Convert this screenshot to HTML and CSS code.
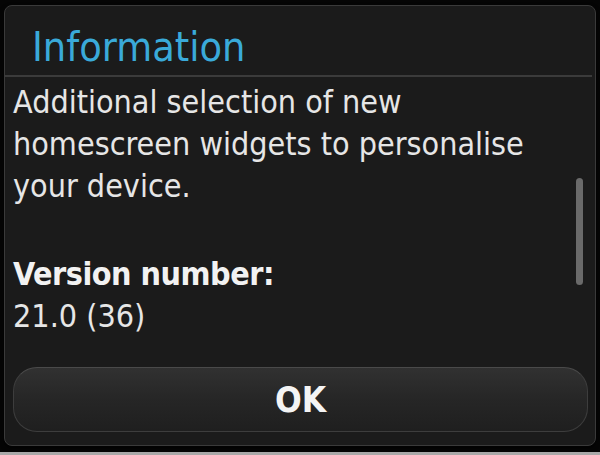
FILE: index.html
```html
<!DOCTYPE html>
<html lang="en">
<head>
    <meta charset="UTF-8">
    <title>Information</title>
    <link rel="stylesheet" href="styles.css">
</head>
<body>
    <div class="dialog">
        <div class="dialog-head">
            <h1>Information</h1>
        </div>
        <div class="dialog-body">
            <p>Additional selection of new homescreen widgets to personalise your device.</p>
            <p class="version"><strong>Version number:</strong><br>21.0 (36)</p>
            <div class="scrollbar"></div>
        </div>
        <div class="dialog-foot">
            <button class="ok-button">OK</button>
        </div>
    </div>
    <div class="softkey-bar"></div>
</body>
</html>
```

FILE: styles.css
```css
html, body {
    margin: 0;
    padding: 0;
}

body {
    width: 600px;
    height: 455px;
    background: #050505;
    font-family: "DejaVu Sans Condensed", "DejaVu Sans", sans-serif;
    font-stretch: condensed;
    display: flex;
    flex-direction: column;
    overflow: hidden;
}

.dialog {
    margin: 5px 4px 0 4px;
    height: 441px;
    background: #1b1b1b;
    border: 1px solid #3a3a3a;
    border-radius: 8px;
    box-shadow: 0 2px 4px rgba(0, 0, 0, 0.8);
    display: flex;
    flex-direction: column;
    box-sizing: border-box;
}

.dialog-head {
    padding: 16px 0 3px 27px;
    border-bottom: 2px solid #3b3b3b;
    margin-right: 3px;
}

.dialog-head h1 {
    margin: 0;
    font-size: 41px;
    line-height: 50px;
    font-weight: normal;
    color: #3aaad9;
}

.dialog-body {
    position: relative;
    flex: 1;
    padding: 4px 0 0 8px;
}

.dialog-body p {
    margin: 0;
    max-width: 540px;
    font-size: 32px;
    line-height: 42px;
    color: #e6e6e6;
}

.dialog-body p.version {
    margin-top: 46px;
}

.version strong {
    font-weight: bold;
    letter-spacing: -0.5px;
    color: #f2f2f2;
}

.scrollbar {
    position: absolute;
    top: 101px;
    left: 571px;
    width: 7px;
    height: 107px;
    border-radius: 4px;
    background: #6a6a6a;
}

.dialog-foot {
    padding: 0 7px 13px 8px;
}

.ok-button {
    display: block;
    width: 100%;
    height: 65px;
    border: 1px solid #3d3d3d;
    border-top-color: #4a4a4a;
    border-radius: 24px;
    background: linear-gradient(180deg, #313131 0%, #262626 50%, #1f1f1f 100%);
    color: #f4f4f4;
    font-family: "DejaVu Sans Condensed", "DejaVu Sans", sans-serif;
    font-stretch: condensed;
    font-size: 35px;
    font-weight: bold;
    padding: 0;
}

.softkey-bar {
    margin-top: auto;
    height: 3px;
    background: #a9a9a9;
}
```
